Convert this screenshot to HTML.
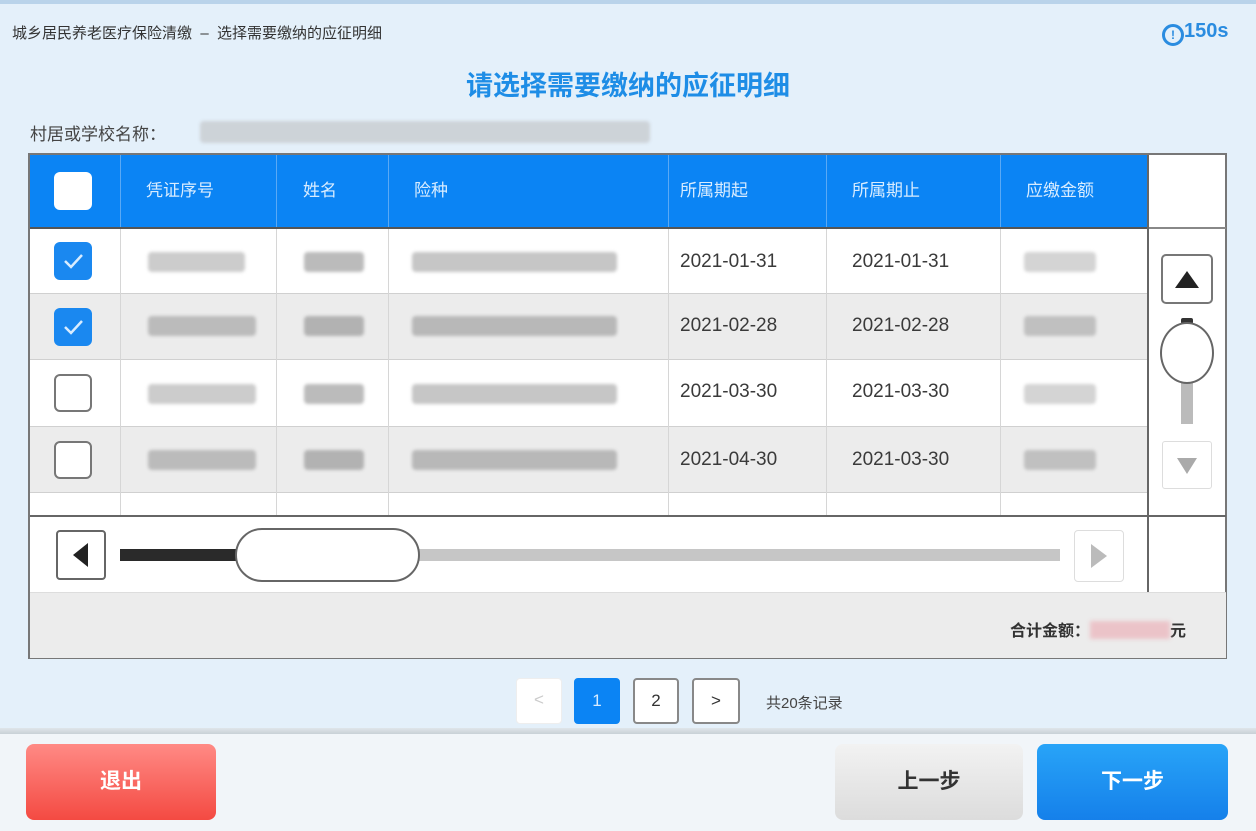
<!DOCTYPE html><html><head><meta charset="utf-8"><style>
*{margin:0;padding:0;box-sizing:border-box}
body{width:1256px;height:831px;overflow:hidden;background:#e4f0fa;font-family:"Liberation Sans","Noto Sans CJK SC",sans-serif;position:relative;color:#333}
.a{position:absolute}
.hd{background:#0b84f4;color:#d8ecff;font-size:17px;line-height:72px;top:155px;height:72px}
.vl{position:absolute;width:1px;background:#d6d6d6}
.bl{position:absolute;background:#ccc;border-radius:4px;filter:blur(1.5px);height:20px}
.dt{position:absolute;font-size:19px;color:#3a3a3a}
.cb{position:absolute;left:54px;width:38px;height:38px;border-radius:6px}
.on{background:#1a88f0}
.off{background:#fff;border:2px solid #777}
.pg{position:absolute;top:678px;width:46px;height:46px;border:2px solid #888;border-radius:4px;background:#fff;font-size:17px;text-align:center;line-height:42px}
.btn{position:absolute;top:744px;height:76px;border-radius:8px;font-size:21px;font-weight:bold;text-align:center;line-height:76px}
</style></head><body>
<div class="a" style="left:0;top:0;width:1256px;height:4px;background:#b9d3ea"></div>
<div class="a" style="left:12px;top:22px;font-size:15px;color:#333">城乡居民养老医疗保险清缴 &nbsp;– &nbsp;选择需要缴纳的应征明细</div>
<div class="a" style="left:1162px;top:19px;font-size:20px;line-height:24px;font-weight:bold;color:#2a8ce0">
<span style="display:inline-block;width:22px;height:22px;border:3px solid #2a8ce0;border-radius:50%;vertical-align:-2px;font-size:12px;line-height:16px;text-align:center">!</span>150s</div>
<div class="a" style="left:0;width:1256px;top:64px;text-align:center;font-size:27px;font-weight:bold;color:#1e8de6">请选择需要缴纳的应征明细</div>
<div class="a" style="left:30px;top:120px;font-size:17px;color:#444">村居或学校名称：</div>
<div class="bl" style="left:200px;top:121px;width:450px;height:22px;background:#cdd3d8"></div>

<div class="a" style="left:28px;top:153px;width:1199px;height:506px;border:2px solid #777;background:#fff"></div>
<div class="a hd" style="left:30px;width:1117px"></div>
<div class="a" style="left:54px;top:172px;width:38px;height:38px;background:#fff;border-radius:6px"></div>
<div class="a" style="left:146px;top:155px;line-height:72px;font-size:17px;color:#d8ecff">凭证序号</div>
<div class="a" style="left:303px;top:155px;line-height:72px;font-size:17px;color:#d8ecff">姓名</div>
<div class="a" style="left:414px;top:155px;line-height:72px;font-size:17px;color:#d8ecff">险种</div>
<div class="a" style="left:680px;top:155px;line-height:72px;font-size:17px;color:#d8ecff">所属期起</div>
<div class="a" style="left:852px;top:155px;line-height:72px;font-size:17px;color:#d8ecff">所属期止</div>
<div class="a" style="left:1026px;top:155px;line-height:72px;font-size:17px;color:#d8ecff">应缴金额</div>
<div class="vl" style="left:120px;top:155px;height:72px;background:#5aa9f5"></div>
<div class="vl" style="left:276px;top:155px;height:72px;background:#5aa9f5"></div>
<div class="vl" style="left:388px;top:155px;height:72px;background:#5aa9f5"></div>
<div class="vl" style="left:668px;top:155px;height:72px;background:#5aa9f5"></div>
<div class="vl" style="left:826px;top:155px;height:72px;background:#5aa9f5"></div>
<div class="vl" style="left:1000px;top:155px;height:72px;background:#5aa9f5"></div>
<div class="a" style="left:30px;top:227px;width:1117px;height:2px;background:#555"></div>

<div class="a" style="left:30px;top:293px;width:1117px;height:67px;background:#ececec;border-top:1px solid #d0d0d0;border-bottom:1px solid #d0d0d0"></div>
<div class="a" style="left:30px;top:426px;width:1117px;height:67px;background:#ececec;border-top:1px solid #d0d0d0;border-bottom:1px solid #d0d0d0"></div>
<div class="vl" style="left:120px;top:229px;height:286px"></div>
<div class="vl" style="left:276px;top:229px;height:286px"></div>
<div class="vl" style="left:388px;top:229px;height:286px"></div>
<div class="vl" style="left:668px;top:229px;height:286px"></div>
<div class="vl" style="left:826px;top:229px;height:286px"></div>
<div class="vl" style="left:1000px;top:229px;height:286px"></div>
<div class="a" style="left:1147px;top:155px;width:2px;height:437px;background:#666"></div>
<div class="a" style="left:1149px;top:227px;width:77px;height:2px;background:#888"></div>
<div class="a" style="left:30px;top:515px;width:1196px;height:2px;background:#666"></div>

<div class="cb on" style="top:242px"><svg width="38" height="38"><path d="M11 19l6 6 11-12" stroke="#d8ecff" stroke-width="2.5" fill="none"/></svg></div>
<div class="cb on" style="top:308px"><svg width="38" height="38"><path d="M11 19l6 6 11-12" stroke="#d8ecff" stroke-width="2.5" fill="none"/></svg></div>
<div class="cb off" style="top:374px"></div>
<div class="cb off" style="top:441px"></div>

<div class="bl" style="left:148px;top:252px;width:97px"></div><div class="bl" style="left:304px;top:252px;width:60px;background:#bbb"></div><div class="bl" style="left:412px;top:252px;width:205px;background:#c6c6c6"></div><div class="bl" style="left:1024px;top:252px;width:72px;background:#d4d4d4"></div>
<div class="bl" style="left:148px;top:316px;width:108px;background:#bbb"></div><div class="bl" style="left:304px;top:316px;width:60px;background:#b2b2b2"></div><div class="bl" style="left:412px;top:316px;width:205px;background:#b8b8b8"></div><div class="bl" style="left:1024px;top:316px;width:72px;background:#c0c0c0"></div>
<div class="bl" style="left:148px;top:384px;width:108px"></div><div class="bl" style="left:304px;top:384px;width:60px;background:#bbb"></div><div class="bl" style="left:412px;top:384px;width:205px;background:#c6c6c6"></div><div class="bl" style="left:1024px;top:384px;width:72px;background:#d4d4d4"></div>
<div class="bl" style="left:148px;top:450px;width:108px;background:#bbb"></div><div class="bl" style="left:304px;top:450px;width:60px;background:#b2b2b2"></div><div class="bl" style="left:412px;top:450px;width:205px;background:#b8b8b8"></div><div class="bl" style="left:1024px;top:450px;width:72px;background:#c0c0c0"></div>

<div class="dt" style="left:680px;top:251px">2021-01-31</div><div class="dt" style="left:852px;top:251px">2021-01-31</div>
<div class="dt" style="left:680px;top:315px">2021-02-28</div><div class="dt" style="left:852px;top:315px">2021-02-28</div>
<div class="dt" style="left:680px;top:381px">2021-03-30</div><div class="dt" style="left:852px;top:381px">2021-03-30</div>
<div class="dt" style="left:680px;top:449px">2021-04-30</div><div class="dt" style="left:852px;top:449px">2021-03-30</div>

<div class="a" style="left:1161px;top:254px;width:52px;height:50px;border:2px solid #777;border-radius:5px;background:#fff"><svg width="48" height="46"><path d="M12 32L24 15 36 32Z" fill="#222"/></svg></div>
<div class="a" style="left:1181px;top:318px;width:12px;height:6px;background:#333;border-radius:2px"></div>
<div class="a" style="left:1181px;top:380px;width:12px;height:44px;background:#bbb"></div>
<div class="a" style="left:1160px;top:322px;width:54px;height:62px;border:2px solid #666;border-radius:50%;background:#fff"></div>
<div class="a" style="left:1162px;top:441px;width:50px;height:48px;border:1px solid #ddd;border-radius:3px;background:#fff"><svg width="48" height="46"><path d="M14 16L24 32 34 16Z" fill="#aaa"/></svg></div>

<div class="a" style="left:56px;top:530px;width:50px;height:50px;border:2px solid #666;border-radius:4px;background:#fff"><svg width="46" height="46"><path d="M30 11L15 23 30 35Z" fill="#222"/></svg></div>
<div class="a" style="left:120px;top:549px;width:130px;height:12px;background:#2a2a2a"></div>
<div class="a" style="left:410px;top:549px;width:650px;height:12px;background:#c6c6c6"></div>
<div class="a" style="left:235px;top:528px;width:185px;height:54px;border:2px solid #666;border-radius:27px;background:#fff"></div>
<div class="a" style="left:1074px;top:530px;width:50px;height:52px;border:1px solid #ddd;border-radius:4px;background:#fff"><svg width="48" height="50"><path d="M16 13L32 25 16 37Z" fill="#bbb"/></svg></div>
<div class="a" style="left:30px;top:592px;width:1196px;height:66px;background:#ececec;border-top:1px solid #ddd"></div>
<div class="a" style="left:1010px;top:617px;font-size:16px;font-weight:bold;color:#333">合计金额：<span style="display:inline-block;width:80px;height:18px;background:#ebc3c8;filter:blur(2px);vertical-align:-3px"></span>元</div>

<div class="pg" style="left:516px;border:1px solid #eee;color:#ccc">&lt;</div>
<div class="pg" style="left:574px;background:#0b84f4;border-color:#0b84f4;color:#d8ecff">1</div>
<div class="pg" style="left:633px">2</div>
<div class="pg" style="left:692px;width:48px">&gt;</div>
<div class="a" style="left:766px;top:692px;font-size:15px;color:#444">共20条记录</div>

<div class="a" style="left:0;top:728px;width:1256px;height:6px;background:linear-gradient(#dfe5ea,#c8d0d6)"></div>
<div class="a" style="left:0;top:734px;width:1256px;height:97px;background:#f1f5f9"></div>
<div class="btn" style="left:26px;width:190px;background:linear-gradient(#ff8a85,#f44a42);color:#fff">退出</div>
<div class="btn" style="left:835px;width:188px;background:linear-gradient(#f2f2f2,#dcdcdc);color:#333">上一步</div>
<div class="btn" style="left:1037px;width:191px;background:linear-gradient(#28a4f8,#1580ea);color:#fff">下一步</div>
</body></html>
